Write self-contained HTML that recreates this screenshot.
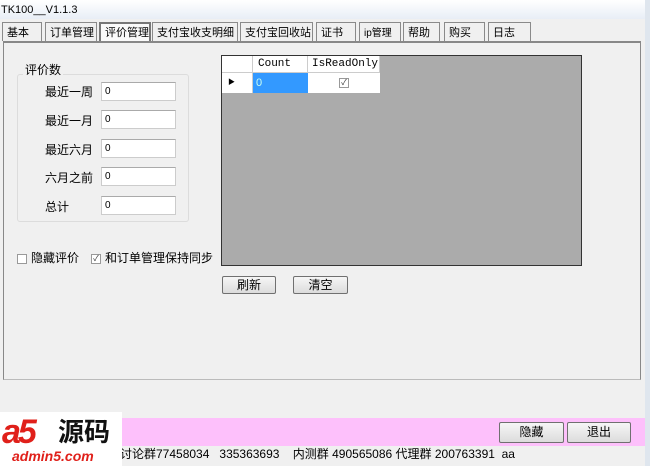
<!DOCTYPE html>
<html><head><meta charset="utf-8"><style>
*{margin:0;padding:0;box-sizing:border-box}
body{width:650px;height:466px;overflow:hidden;background:#f0f0f0;font-family:"Liberation Sans","Noto Sans CJK SC",sans-serif;font-size:12px;line-height:14px;color:#000;position:relative}
.a{position:absolute}
.title{left:0;top:0;width:650px;height:19px;background:linear-gradient(#fff,#e8eef6);font-size:11px;padding:3px 0 0 1px}
.tab{position:absolute;top:22px;height:19px;border:1px solid #8a8a8a;border-bottom:none;background:#f0f0f0;font-size:11px;padding:3px 0 0 4px;white-space:nowrap;overflow:hidden}
.tab.sel{background:#fafafa;border:2px solid #777;border-bottom:none;padding-top:2px}
.inp{position:absolute;left:101px;width:75px;height:19px;background:#fff;border:1px solid #ccc;border-top-color:#aaa;font-size:10px;padding:2px 0 0 3px}
.lbl{position:absolute;left:45px;font-size:12px}
.btn{position:absolute;border:1px solid #707070;border-radius:2px;background:linear-gradient(#f6f6f6,#dcdcdc);text-align:center;font-size:12px}
.cb{position:absolute;width:10px;height:10px;border:1px solid #999;background:#fff}
</style></head><body>
<div class="a title">TK100__V1.1.3</div>
<div class="tab" style="left:2px;width:40px">基本</div>
<div class="tab" style="left:45px;width:52px">订单管理</div>
<div class="tab sel" style="left:99px;width:52px">评价管理</div>
<div class="tab" style="left:152px;width:86px">支付宝收支明细</div>
<div class="tab" style="left:240px;width:73px">支付宝回收站</div>
<div class="tab" style="left:316px;width:40px">证书</div>
<div class="tab" style="left:359px;width:42px;font-size:10px;padding-top:4px">ip管理</div>
<div class="tab" style="left:403px;width:37px">帮助</div>
<div class="tab" style="left:444px;width:41px">购买</div>
<div class="tab" style="left:488px;width:43px">日志</div>
<div class="a" style="left:3px;top:41px;width:638px;height:339px;border:1px solid #888;border-top:2px solid #888;border-bottom:1px solid #bbb"></div>
<div class="a" style="left:645px;top:0;width:5px;height:466px;background:#dfe6ee"></div>

<div class="a" style="left:17px;top:74px;width:172px;height:148px;border:1px solid #dcdcdc;border-radius:3px"></div>
<div class="a" style="left:23px;top:63px;background:#f0f0f0;padding:0 2px">评价数</div>
<div class="lbl" style="top:85px">最近一周</div><div class="inp" style="top:82px">0</div>
<div class="lbl" style="top:114px">最近一月</div><div class="inp" style="top:110px">0</div>
<div class="lbl" style="top:143px">最近六月</div><div class="inp" style="top:139px">0</div>
<div class="lbl" style="top:171px">六月之前</div><div class="inp" style="top:167px">0</div>
<div class="lbl" style="top:200px">总计</div><div class="inp" style="top:196px">0</div>

<div class="cb" style="left:17px;top:254px"></div>
<div class="a" style="left:31px;top:251px">隐藏评价</div>
<div class="cb" style="left:91px;top:254px;font-size:8px;line-height:8px;color:#333;text-align:center">✓</div>
<div class="a" style="left:105px;top:251px">和订单管理保持同步</div>

<div class="a" style="left:221px;top:55px;width:361px;height:211px;background:#ababab;border:1px solid #333"></div>
<div class="a" style="left:222px;top:56px;width:31px;height:17px;background:#fff;border-right:1px solid #ccc;border-bottom:1px solid #ccc"></div>
<div class="a" style="left:253px;top:56px;width:55px;height:17px;background:#fff;border-right:1px solid #ccc;border-bottom:1px solid #ccc;font-family:'Liberation Mono',monospace;font-size:11px;padding:1px 0 0 5px">Count</div>
<div class="a" style="left:308px;top:56px;width:72px;height:17px;background:#fff;border-right:1px solid #ccc;border-bottom:1px solid #ccc;font-family:'Liberation Mono',monospace;font-size:11px;padding:1px 0 0 4px">IsReadOnly</div>
<div class="a" style="left:222px;top:73px;width:31px;height:20px;background:#fff;border-right:1px solid #ccc;font-size:7px;padding:3px 0 0 6px">▶</div>
<div class="a" style="left:253px;top:73px;width:55px;height:20px;background:#3399ff;color:#cfe;font-size:11px;padding:3px 0 0 3px">0</div>
<div class="a" style="left:308px;top:73px;width:72px;height:20px;background:#fff"></div>
<div class="cb" style="left:339px;top:78px;font-size:8px;line-height:8px;color:#333;text-align:center">✓</div>

<div class="btn" style="left:222px;top:276px;width:54px;height:18px;line-height:16px">刷新</div>
<div class="btn" style="left:293px;top:276px;width:55px;height:18px;line-height:16px">清空</div>

<div class="a" style="left:0;top:418px;width:645px;height:28px;background:#fdc0fb"></div>
<div class="btn" style="left:499px;top:422px;width:65px;height:21px;line-height:19px">隐藏</div>
<div class="btn" style="left:567px;top:422px;width:64px;height:21px;line-height:19px">退出</div>
<div class="a" style="left:120px;top:447px;font-size:12px;white-space:pre">讨论群77458034   335363693    内测群 490565086 代理群 200763391  aa</div>

<div class="a" style="left:0;top:412px;width:122px;height:54px;background:#fff"></div>
<div class="a" style="left:2px;top:414px;font:bold italic 34px 'Liberation Sans',sans-serif;line-height:36px;color:#e0201a;letter-spacing:-3px">a5</div>
<div class="a" style="left:58px;top:416px;font:bold 26px 'Noto Sans CJK SC',sans-serif;color:#111;line-height:30px">源码</div>
<div class="a" style="left:12px;top:448px;font:bold italic 14px 'Liberation Sans',sans-serif;color:#e0201a">admin5.com</div>
</body></html>
